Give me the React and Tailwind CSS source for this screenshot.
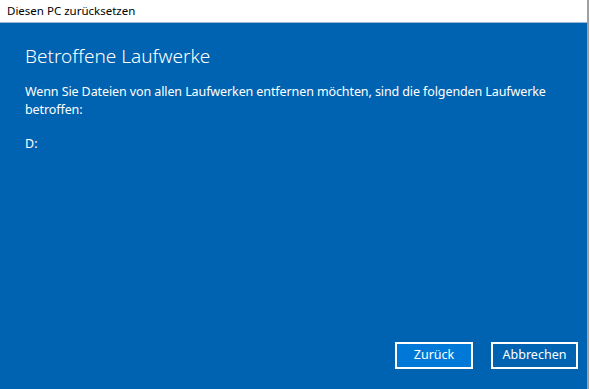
export default function App() {
  return (
    <div className="w-[590px] h-[389px] flex bg-white overflow-hidden" style={{ fontFamily: '"Noto Sans", "Open Sans", sans-serif' }}>
      <div className="w-[587px] flex flex-col">
        {/* Title bar */}
        <div className="h-[23px] flex items-center px-[7px] bg-white text-[11.5px] text-black border-b border-[#9bb7d3]">
          Diesen PC zurücksetzen
        </div>

        {/* Content */}
        <div className="flex-1 bg-[#0063b1] text-white flex flex-col pl-[25px] pr-[9px] pt-[19px] pb-[20px]">
          <h1 className="text-[19px] font-light leading-[28px]">Betroffene Laufwerke</h1>
          <p className="mt-[13px] text-[12.5px] leading-[18px] tracking-[-0.1px]">
            Wenn Sie Dateien von allen Laufwerken entfernen möchten, sind die folgenden Laufwerke
            <br />
            betroffen:
          </p>
          <p className="mt-[16px] text-[12.5px] leading-[18px]">D:</p>

          <div className="mt-auto flex justify-end gap-[18px]">
            <button className="w-[78px] h-[27px] bg-[#0078d7] border-2 border-white text-white text-[12.5px]">
              Zurück
            </button>
            <button className="w-[87px] h-[27px] border-2 border-white text-white text-[12.5px]">
              Abbrechen
            </button>
          </div>
        </div>
      </div>
      <div className="w-[2px] bg-[#a0a0a0]" />
      <div className="w-[1px] bg-white" />
    </div>
  );
}
